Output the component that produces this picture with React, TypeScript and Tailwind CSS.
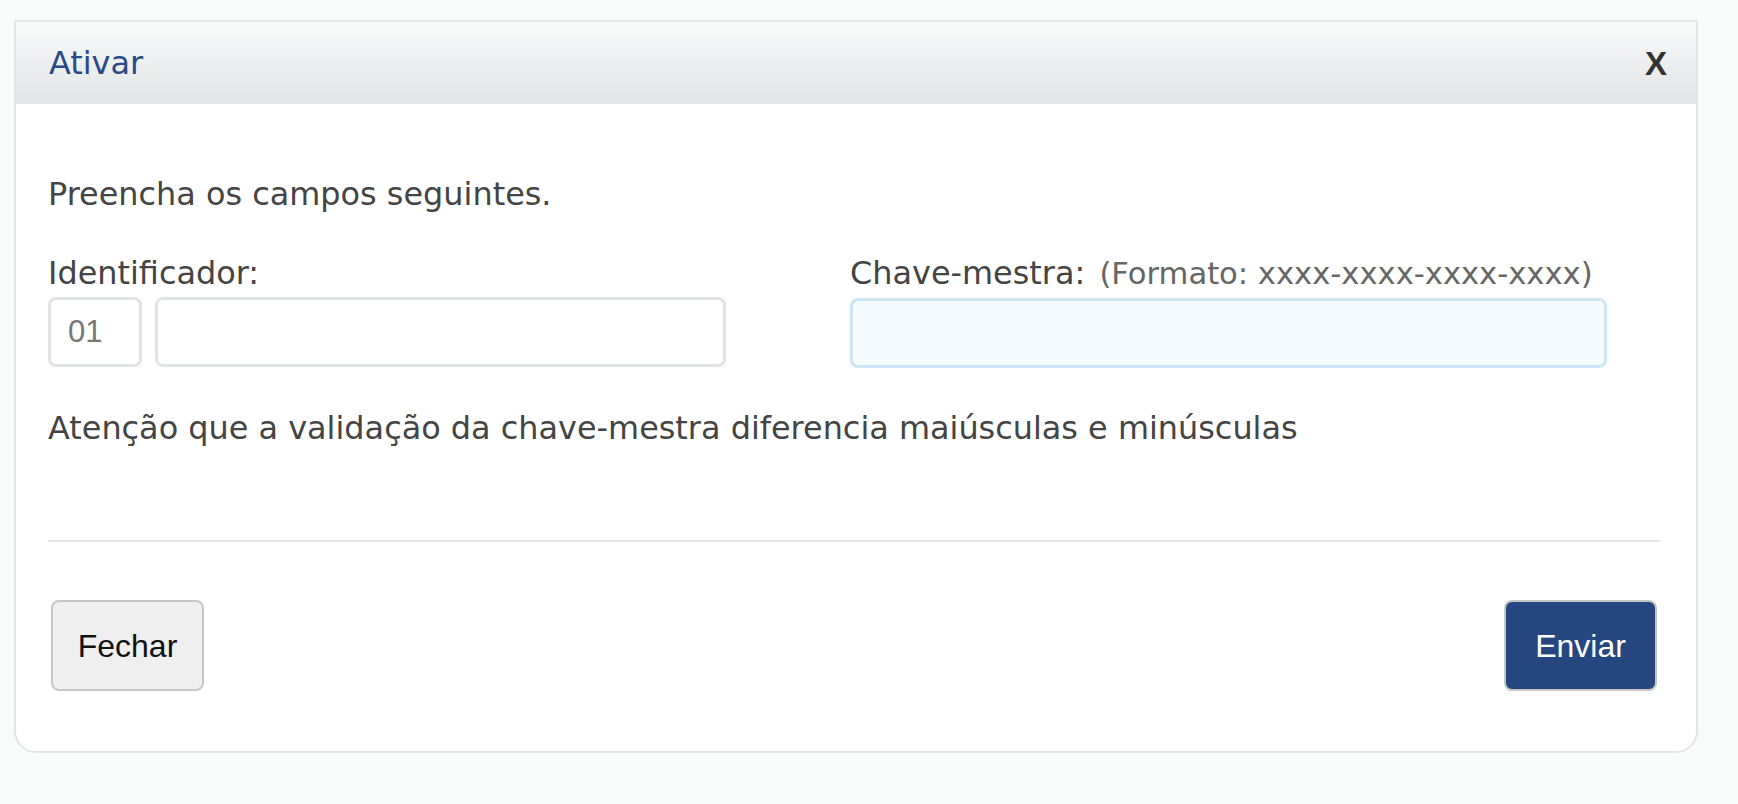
import React from "react";

const body = { fontFamily: '"DejaVu Sans", Verdana, sans-serif' };
const arial = { fontFamily: '"Liberation Sans", Arial, sans-serif' };

const App = () => {
  return (
    <div className="min-h-[804px] bg-[#f9fafa] pt-[20px] pl-[14px]" style={body}>
      <div className="w-[1684px] border-2 border-[#e5e5e5] rounded-b-[22px] bg-white">
        <div className="h-[82px] flex items-center justify-between pl-[33px] pr-[29px] bg-linear-to-b from-[#f8f9f9] to-[#e3e4e6]">
          <h2 className="text-[31.9px] leading-[40px] text-[#284a86]">Ativar</h2>
          <button className="text-[33px] leading-none font-bold text-[#333]" style={arial}>
            X
          </button>
        </div>

        <div className="pt-[70px] pl-[32px] pr-[36px] pb-[60px] text-[#444]">
          <p className="text-[31.9px] leading-[40px]">Preencha os campos seguintes.</p>

          <div className="flex mt-[39px]">
            <div className="w-[802px]">
              <label className="block text-[31.9px] leading-[40px]">Identificador:</label>
              <div className="flex gap-[13px] mt-[4px]">
                <input
                  readOnly
                  value="01"
                  className="w-[94px] h-[70px] border-[3px] border-[#e0e3e7] rounded-[8px] px-[17px] text-[31px] text-[#777] bg-white outline-none"
                  style={arial}
                />
                <input
                  className="w-[571px] h-[70px] border-[3px] border-[#e0e3e7] rounded-[8px] px-[16px] text-[30px] bg-white outline-none"
                  style={arial}
                />
              </div>
            </div>
            <div>
              <label className="block text-[31.9px] leading-[40px] whitespace-nowrap">
                Chave-mestra:{" "}
                <span className="ml-[4px] text-[30.6px] text-[#666]">(Formato: xxxx-xxxx-xxxx-xxxx)</span>
              </label>
              <input
                className="mt-[4px] w-[757px] h-[70px] border-[3px] border-[#cde6f5] rounded-[8px] px-[16px] text-[30px] bg-[#f5fafe] outline-none"
                style={arial}
              />
            </div>
          </div>

          <p className="mt-[40px] text-[31.9px] leading-[40px]">
            Atenção que a validação da chave-mestra diferencia maiúsculas e minúsculas
          </p>

          <hr className="mt-[92px] border-0 border-t-2 border-[#e6e6e6]" />

          <div className="flex justify-between mt-[58px] px-[3px]" style={arial}>
            <button className="w-[153px] h-[91px] border-2 border-[#c6c6c6] rounded-[8px] bg-[#efefef] text-[32px] text-[#111]">
              Fechar
            </button>
            <button className="w-[153px] h-[91px] border-2 border-[#c6c6c6] rounded-[8px] bg-[#26467f] text-[32px] text-white">
              Enviar
            </button>
          </div>
        </div>
      </div>
    </div>
  );
};

export default App;
